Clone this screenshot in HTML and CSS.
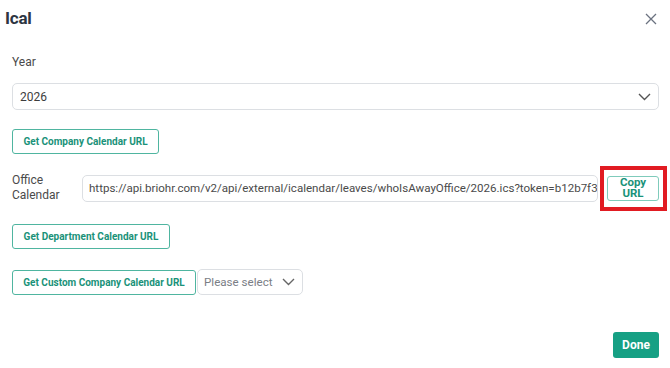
FILE: index.html
```html
<!DOCTYPE html>
<html>
<head>
<meta charset="utf-8">
<link rel="stylesheet" href="styles.css">
</head>
<body>
<div class="modal">
  <div class="header">
    <h1 class="title">Ical</h1>
    <button class="close" aria-label="Close">
      <svg width="12" height="12" viewBox="0 0 12 12"><path d="M1 1L11 11M11 1L1 11" stroke="#6b7280" stroke-width="1.3" fill="none"/></svg>
    </button>
  </div>
  <div class="body">
    <div class="label year-label">Year</div>
    <div class="select year-select">
      <span>2026</span>
      <svg class="chev" width="13" height="8" viewBox="0 0 13 8"><path d="M1 1L6.5 6.5L12 1" stroke="#555" stroke-width="1.4" fill="none"/></svg>
    </div>
    <button class="btn-outline btn-company">Get Company Calendar URL</button>
    <div class="url-row">
      <div class="url-label">Office<br>Calendar</div>
      <div class="url-input">https://api.briohr.com/v2/api/external/icalendar/leaves/whoIsAwayOffice/2026.ics?token=b12b7f3</div>
      <div class="copy-wrap">
        <button class="btn-copy">Copy<br>URL</button>
      </div>
    </div>
    <button class="btn-outline btn-dept">Get Department Calendar URL</button>
    <div class="custom-row">
      <button class="btn-outline btn-custom">Get Custom Company Calendar URL</button>
      <div class="select small-select">
        <span class="placeholder">Please select</span>
        <svg class="chev" width="13" height="8" viewBox="0 0 13 8"><path d="M1 1L6.5 6.5L12 1" stroke="#666" stroke-width="1.4" fill="none"/></svg>
      </div>
    </div>
  </div>
  <div class="footer">
    <button class="btn-done">Done</button>
  </div>
</div>
</body>
</html>
```
FILE: styles.css
```css
* { box-sizing: border-box; }
html, body { margin: 0; padding: 0; background: #fff; }
body { font-family: Roboto, "Noto Sans", sans-serif; color: #444; width: 670px; height: 368px; overflow: hidden; }
.modal { width: 670px; height: 368px; display: flex; flex-direction: column; }
.header { display: flex; justify-content: space-between; align-items: center; padding: 6px 12px 0 5px; height: 30px; }
.title { margin: 0; font-size: 17px; font-weight: 700; color: #2d3542; letter-spacing: -0.2px; }
.close { border: 0; background: none; padding: 0; width: 14px; height: 14px; display: flex; align-items: center; justify-content: center; margin-top: 2px; }
.body { padding: 0 11px 0 12px; display: flex; flex-direction: column; align-items: flex-start; }
.label { font-size: 12px; color: #4a4a4a; }
.year-label { margin-top: 25px; line-height: 14px; }
.select { display: flex; align-items: center; justify-content: space-between; border: 1px solid #dcdfe3; border-radius: 5px; background: #fff; }
.year-select { margin-top: 14px; width: 100%; height: 27px; padding: 0 7px 0 7px; font-size: 12px; color: #3d3d3d; }
.btn-outline { font-family: Roboto, sans-serif; font-size: 10px; font-weight: 700; color: #1a9279; background: #fff; border: 1px solid #4fb5a0; border-radius: 3px; height: 25px; padding: 0; white-space: nowrap; text-align: center; }
.btn-company { margin-top: 19px; width: 147px; }
.url-row { margin-top: 19px; width: 100%; height: 30px; display: flex; align-items: center; }
.url-label { width: 70px; font-size: 12px; line-height: 15px; color: #4a4a4a; }
.url-input { flex: 1; height: 27px; border: 1px solid #dcdfe3; border-radius: 5px; font-size: 11.55px; line-height: 25px; padding: 0 0 0 6px; color: #4a4a4a; white-space: nowrap; overflow: hidden; margin-right: 9px; }
.copy-wrap { position: relative; display: flex; }
.copy-wrap::after { content: ""; position: absolute; top: -10px; bottom: -10px; left: -7px; right: -8px; border: 4px solid #e11b22; pointer-events: none; }
.btn-copy { width: 52px; height: 25px; font-family: Roboto, sans-serif; font-size: 11.5px; font-weight: 700; line-height: 11.5px; color: #1a9279; background: #fff; border: 1px solid #7fcbbb; border-radius: 3px; padding: 0; }
.btn-dept { margin-top: 21px; width: 158px; }
.custom-row { margin-top: 20px; display: flex; align-items: center; gap: 1px; }
.btn-custom { width: 184px; }
.small-select { width: 106px; height: 26px; padding: 0 7px 0 6px; font-size: 12px; }
.placeholder { color: #7a7e85; font-size: 11.6px; }
.footer { margin-top: auto; display: flex; justify-content: flex-end; padding: 0 11px 10px 0; }
.btn-done { width: 46px; height: 26px; border: 0; border-radius: 3px; background: #16a084; color: #fff; font-family: Roboto, sans-serif; font-weight: 700; font-size: 12px; padding: 0; }
```
